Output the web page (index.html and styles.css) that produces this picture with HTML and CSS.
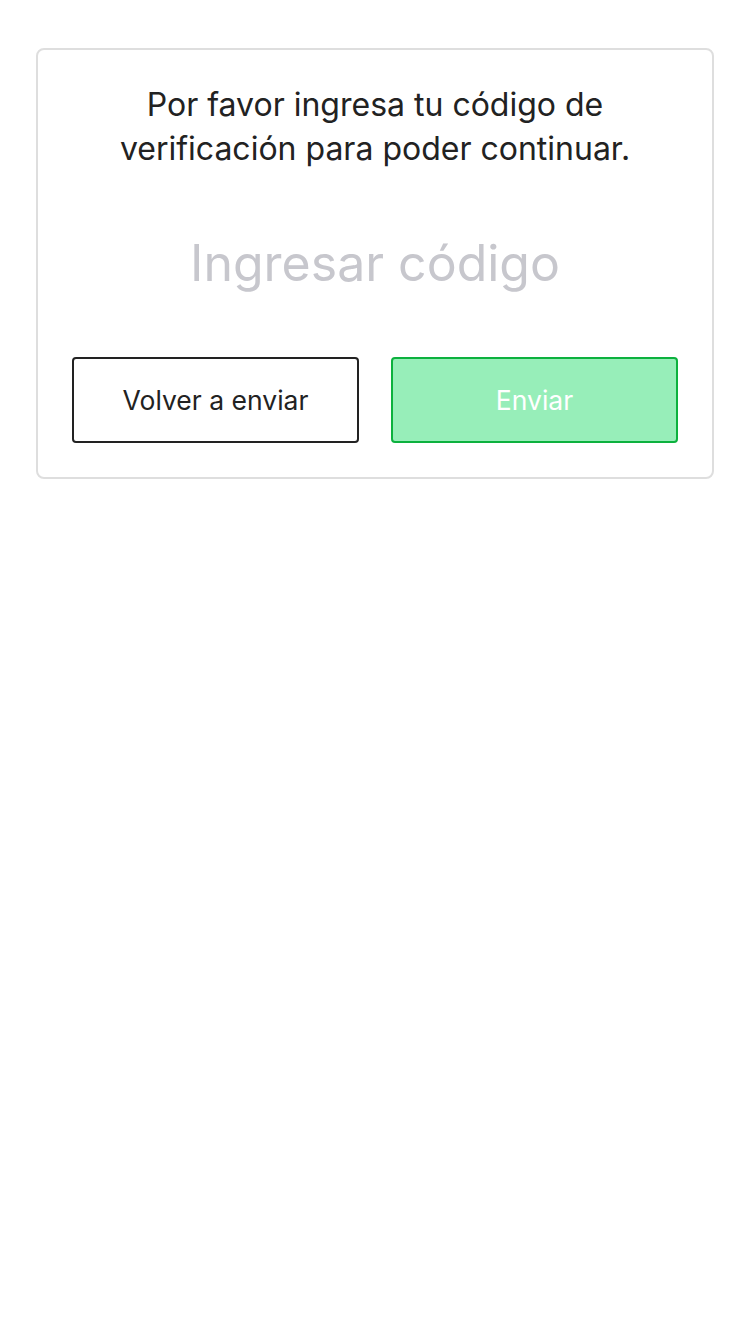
FILE: index.html
```html
<!DOCTYPE html>
<html lang="es">
<head>
<meta charset="utf-8">
<link rel="stylesheet" href="styles.css">
</head>
<body>
<div class="card">
  <p class="message">Por favor ingresa tu código de verificación para poder continuar.</p>
  <input class="code" type="text" placeholder="Ingresar código">
  <div class="actions">
    <button class="btn btn-outline">Volver a enviar</button>
    <button class="btn btn-primary">Enviar</button>
  </div>
</div>
</body>
</html>
```
FILE: styles.css
```css
html, body {
  margin: 0;
  padding: 0;
  background: #fff;
}
body {
  font-family: Inter, "Noto Sans", sans-serif;
  color: #222;
}
.card {
  box-sizing: border-box;
  width: 678px;
  margin: 48px 0 0 36px;
  border: 2px solid #dedede;
  border-radius: 8px;
  padding: 33px 34px 34px;
  display: flex;
  flex-direction: column;
}
.message {
  margin: 0 auto;
  width: 540px;
  text-align: center;
  font-size: 32px;
  line-height: 44px;
  color: #222;
}
.code {
  margin: 52px 0 0;
  height: 80px;
  border: none;
  outline: none;
  padding: 0;
  text-align: center;
  font-family: inherit;
  font-size: 50px;
  color: #222;
  background: transparent;
}
.code::placeholder {
  color: #c7c7cd;
}
.actions {
  margin-top: 54px;
  display: flex;
  gap: 32px;
}
.btn {
  flex: 1;
  height: 86px;
  border-radius: 4px;
  font-family: inherit;
  font-size: 26.5px;
  padding: 0;
}
.btn-outline {
  background: #fff;
  border: 2px solid #222;
  color: #222;
}
.btn-primary {
  background: #97eeb9;
  border: 2px solid #0cb13e;
  color: #fff;
}
```
